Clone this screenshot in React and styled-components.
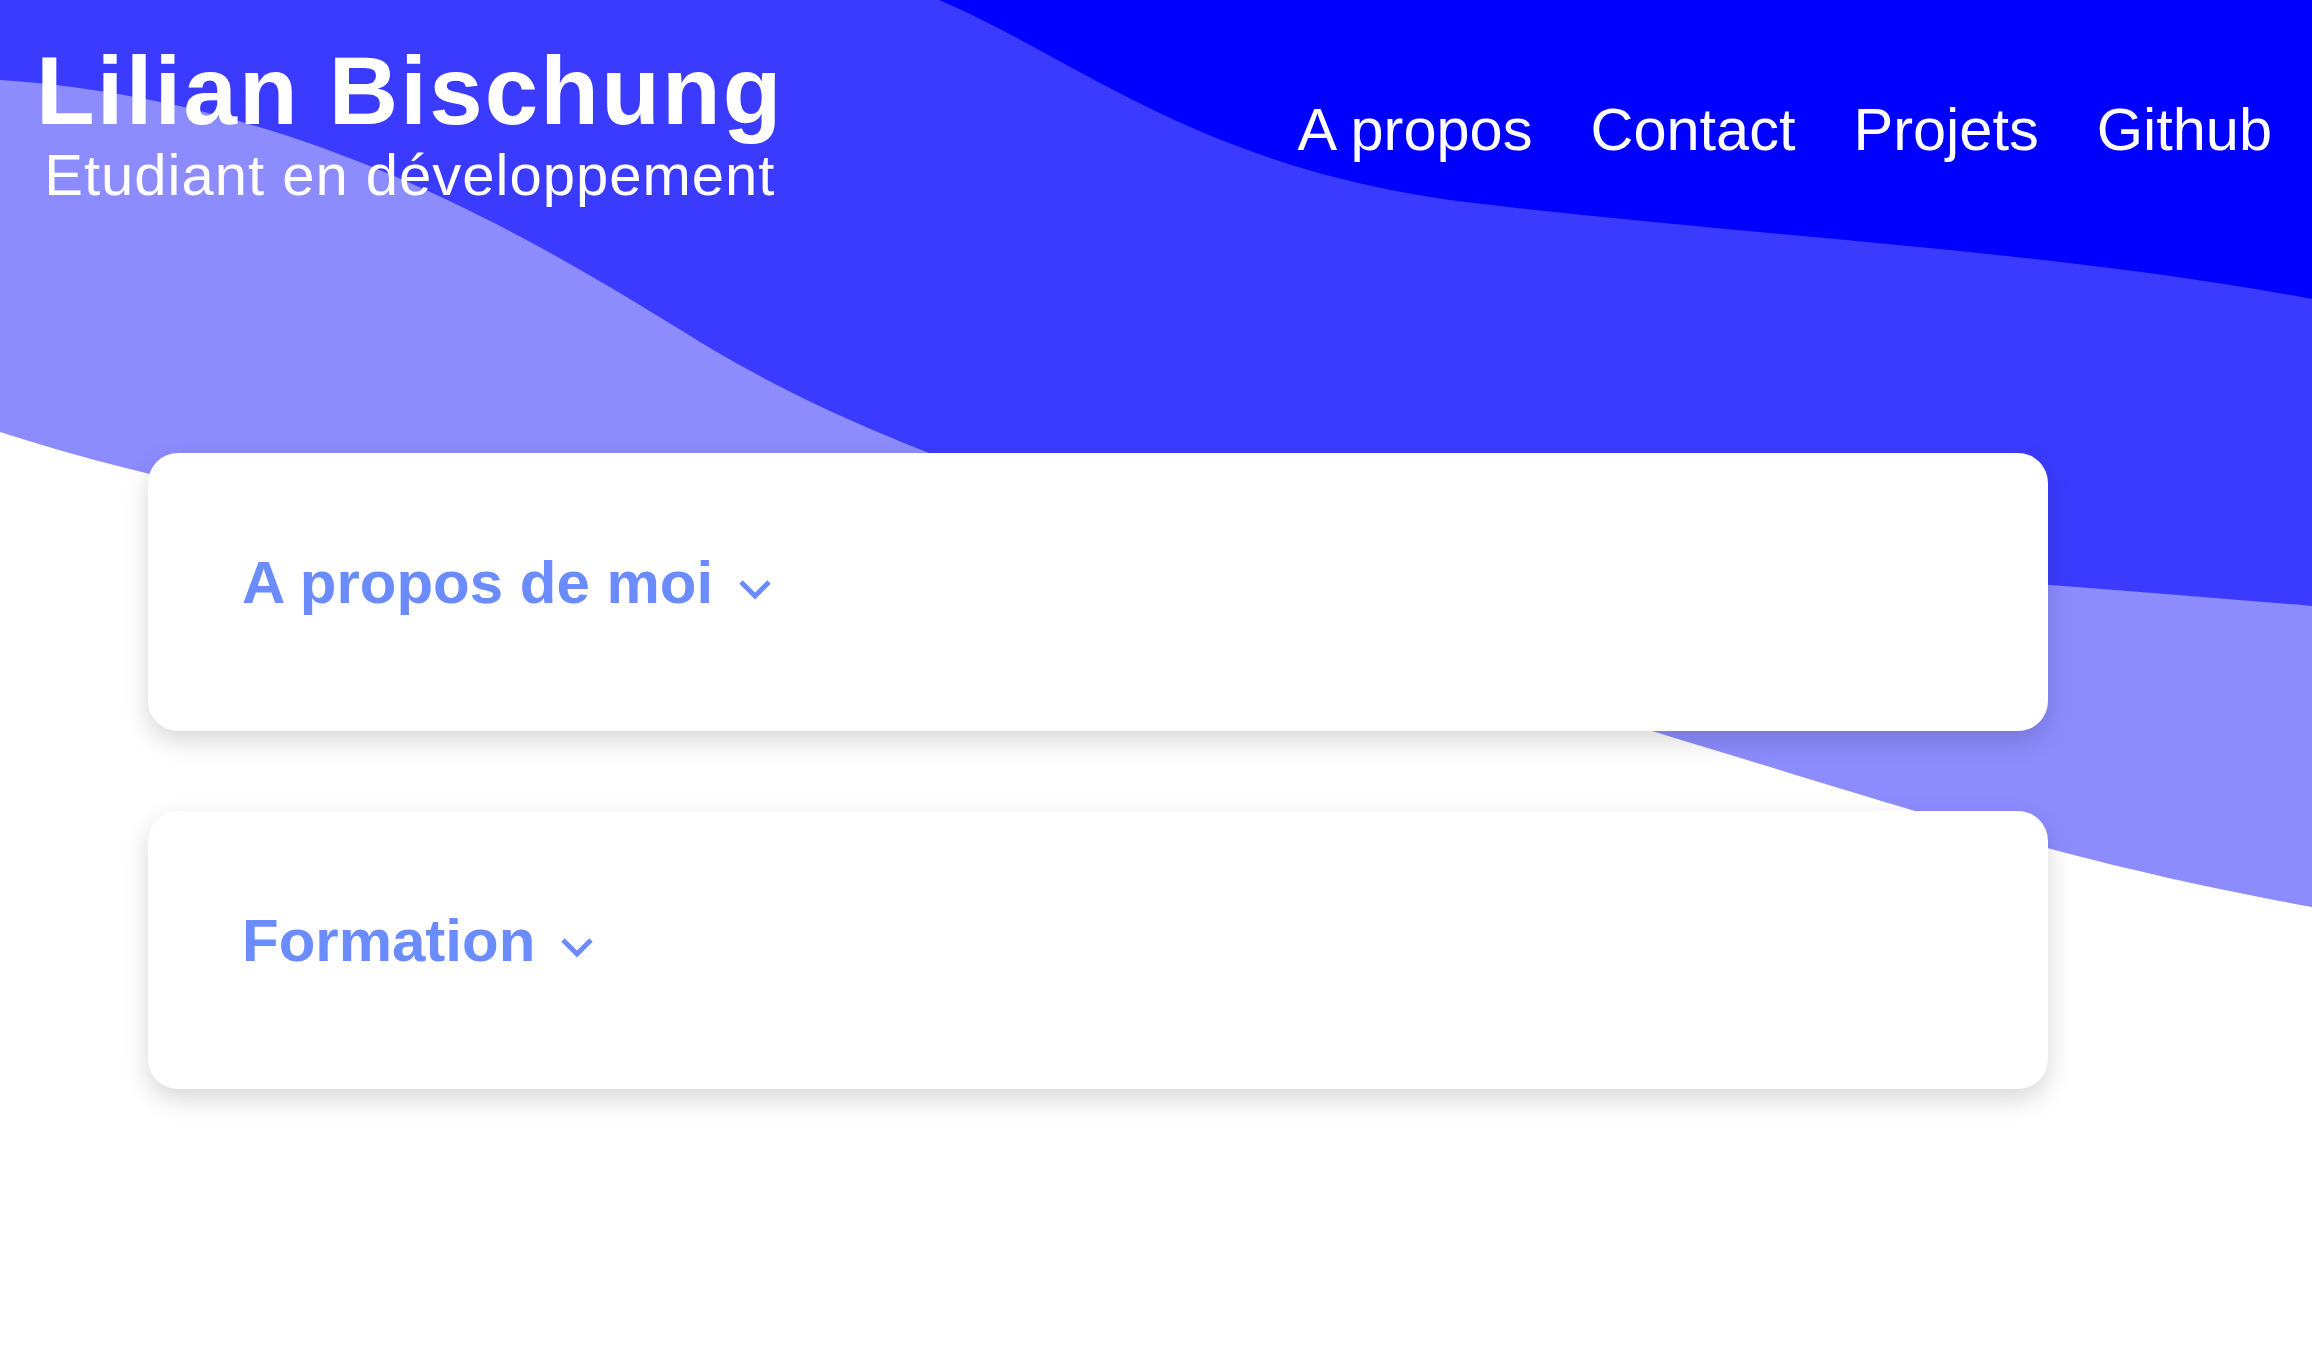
import styled, { createGlobalStyle } from 'styled-components'

const GlobalStyle = createGlobalStyle`
  html, body {
    margin: 0;
    padding: 0;
    background: #ffffff;
  }
  body {
    font-family: 'Liberation Sans', Arial, sans-serif;
  }
`

const Page = styled.div`
  position: relative;
  width: 100%;
  min-height: 1360px;
  overflow: hidden;
`

const Waves = styled.svg`
  position: absolute;
  top: 0;
  left: 0;
  width: 2312px;
  height: 1000px;
  z-index: 0;
`

const Content = styled.div`
  position: relative;
  z-index: 1;
`

const Header = styled.header`
  display: flex;
  justify-content: space-between;
  align-items: flex-start;
  padding: 43px 40px 0 36px;
`

const Brand = styled.div`
  display: flex;
  flex-direction: column;
  align-items: center;
  color: #ffffff;
`

const Title = styled.h1`
  margin: 0;
  font-size: 96px;
  font-weight: 700;
  letter-spacing: 2.2px;
  line-height: 1;
`

const Subtitle = styled.p`
  margin: 7px 0 0;
  font-size: 58px;
  font-weight: 400;
  letter-spacing: 1px;
  line-height: 1;
`

const Nav = styled.nav`
  display: flex;
  gap: 58px;
  margin-top: 57px;
`

const NavLink = styled.a`
  color: #ffffff;
  font-size: 59.5px;
  line-height: 1;
  text-decoration: none;
  cursor: pointer;
`

const Main = styled.main`
  display: flex;
  flex-direction: column;
  gap: 80px;
  padding: 249px 0 0 148px;
`

const Card = styled.section`
  width: 1900px;
  box-sizing: border-box;
  padding: 100px 94px 118px;
  background: #ffffff;
  border-radius: 30px;
  box-shadow: 0 10px 26px rgba(0, 0, 0, 0.16);
`

const CardHeader = styled.h2`
  display: flex;
  align-items: center;
  gap: 14px;
  height: 60px;
  margin: 0;
  color: #6b8cff;
  font-size: 60px;
  font-weight: 700;
  line-height: 1;
  cursor: pointer;
`

const ChevronIcon = styled.svg`
  flex: none;
  margin: 6px 0 -6px;
`

const Chevron = () => (
  <ChevronIcon width='56' height='56' viewBox='0 0 24 24'>
    <path
      d='m6 9 6 6 6-6'
      fill='none'
      stroke='#6b8cff'
      strokeWidth='2.1'
      strokeLinecap='butt'
      strokeLinejoin='miter'
    />
  </ChevronIcon>
)

const sections = ['A propos de moi', 'Formation']
const links = ['A propos', 'Contact', 'Projets', 'Github']

const App = () => {
  return (
    <Page>
      <GlobalStyle />
      <Waves viewBox='0 0 2312 1000' preserveAspectRatio='none'>
        <path
          d='M0,432 C442,575 1032,575 1622,722 C1917,811 2064,862 2312,907 L2312,0 L0,0 Z'
          fill='#8c8cff'
        />
        <path
          d='M0,80 C300,100 520,230 700,342 C800,402 880,435 1000,480 C1100,520 1700,555 2312,606 L2312,0 L0,0 Z'
          fill='#3b3bff'
        />
        <path
          d='M939,0 C1080,60 1200,170 1474,203 C1750,236 2050,250 2312,299 L2312,0 Z'
          fill='#0000ff'
        />
      </Waves>
      <Content>
        <Header>
          <Brand>
            <Title>Lilian Bischung</Title>
            <Subtitle>Etudiant en développement</Subtitle>
          </Brand>
          <Nav>
            {links.map(link => (
              <NavLink key={link}>{link}</NavLink>
            ))}
          </Nav>
        </Header>
        <Main>
          {sections.map(section => (
            <Card key={section}>
              <CardHeader>
                {section}
                <Chevron />
              </CardHeader>
            </Card>
          ))}
        </Main>
      </Content>
    </Page>
  )
}

export default App
